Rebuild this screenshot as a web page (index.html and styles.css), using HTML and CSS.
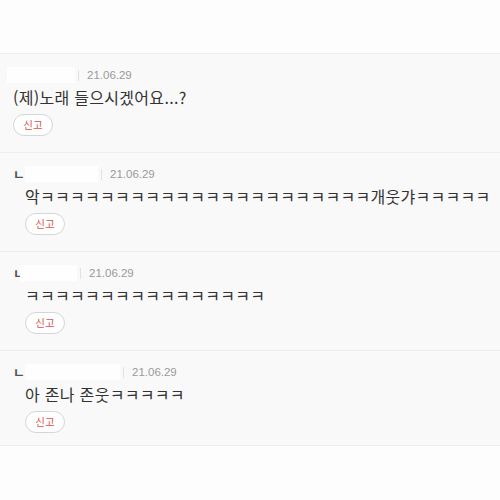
FILE: index.html
```html
<!DOCTYPE html>
<html lang="ko">
<head>
<meta charset="utf-8">
<link rel="stylesheet" href="styles.css">
</head>
<body>
<div class="top"></div>
<ul class="comments">
  <li class="comment">
    <div class="meta"><span class="name n1"></span><span class="sep"></span><span class="date">21.06.29</span></div>
    <p class="text">(제)노래 들으시겠어요...?</p>
    <button class="report">신고</button>
  </li>
  <li class="comment reply">
    <div class="meta"><span class="mark">ㄴ</span><span class="name n2"></span><span class="sep"></span><span class="date">21.06.29</span></div>
    <p class="text">악ㅋㅋㅋㅋㅋㅋㅋㅋㅋㅋㅋㅋㅋㅋㅋㅋㅋㅋㅋㅋㅋㅋ개웃갸ㅋㅋㅋㅋㅋ</p>
    <button class="report">신고</button>
  </li>
  <li class="comment reply">
    <div class="meta"><span class="mark">ㄴ</span><span class="name n3"></span><span class="sep"></span><span class="date">21.06.29</span></div>
    <p class="text">ㅋㅋㅋㅋㅋㅋㅋㅋㅋㅋㅋㅋㅋㅋㅋㅋ</p>
    <button class="report">신고</button>
  </li>
  <li class="comment reply last">
    <div class="meta"><span class="mark">ㄴ</span><span class="name n4"></span><span class="sep"></span><span class="date">21.06.29</span></div>
    <p class="text">아 존나 존웃ㅋㅋㅋㅋㅋ</p>
    <button class="report">신고</button>
  </li>
</ul>
<div class="bottom"></div>
</body>
</html>
```
FILE: styles.css
```css
html, body {
  margin: 0;
  padding: 0;
  background: #fdfdfd;
  font-family: "Noto Sans CJK KR", "Noto Sans", sans-serif;
  color: #333;
}
.top {
  height: 53px;
  background: #fdfdfd;
  border-bottom: 1px solid #eeeeee;
}
.comments {
  list-style: none;
  margin: 0;
  padding: 0;
  background: #f9f9f9;
}
.comment {
  padding: 12px 0 16px 13px;
  border-bottom: 1px solid #ededed;
  display: flex;
  flex-direction: column;
  align-items: flex-start;
}
.comment.last {
  padding-bottom: 12px;
}
.meta {
  height: 18px;
  display: flex;
  align-items: center;
}
.name {
  height: 16px;
  background: #fefefe;
}
.n1 { width: 68px; margin-left: -6px; }
.n2 { width: 73px; }
.n3 { width: 57px; margin-left: -5px; }
.n4 { width: 95px; }
.mark {
  width: 12px;
  font-size: 13px;
  font-weight: 600;
  color: #555;
  line-height: 18px;
}
.sep {
  width: 1px;
  height: 11px;
  background: #e2e2e2;
  margin: 0 8px 0 3px;
}
.date {
  font-size: 11.5px;
  color: #9a9a9a;
  font-family: "Liberation Sans", Arial, sans-serif;
}
.text {
  margin: 3px 0 0 0;
  font-size: 16px;
  letter-spacing: 0.3px;
  line-height: 20px;
  white-space: nowrap;
}
.reply .text, .reply .report {
  margin-left: 12px;
}
.report {
  margin-top: 7px;
  width: 40px;
  height: 22px;
  padding: 0;
  border: 1px solid #d6d6d6;
  border-radius: 11px;
  background: #fff;
  color: #d9534f;
  font-family: "Noto Sans CJK KR", sans-serif;
  font-size: 10.5px;
  line-height: 20px;
}
.bottom {
  height: 60px;
}
```
